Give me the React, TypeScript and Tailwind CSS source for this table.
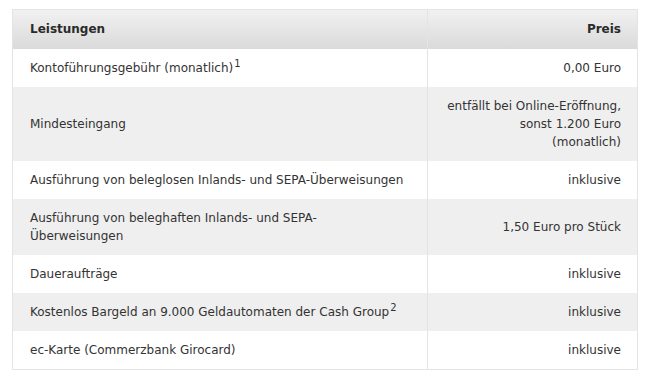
import React from 'react';

interface Row {
  label: React.ReactNode;
  price: React.ReactNode;
}

const rows: Row[] = [
  {
    label: (
      <>
        Kontoführungsgebühr (monatlich)<sup className="text-[10px] ml-[1px]">1</sup>
      </>
    ),
    price: '0,00 Euro',
  },
  {
    label: 'Mindesteingang',
    price: (
      <>
        entfällt bei Online-Eröffnung,
        <br />
        sonst 1.200 Euro
        <br />
        (monatlich)
      </>
    ),
  },
  { label: 'Ausführung von beleglosen Inlands- und SEPA-Überweisungen', price: 'inklusive' },
  {
    label: (
      <>
        Ausführung von beleghaften Inlands- und SEPA-
        <br />
        Überweisungen
      </>
    ),
    price: '1,50 Euro pro Stück',
  },
  { label: 'Daueraufträge', price: 'inklusive' },
  {
    label: (
      <>
        Kostenlos Bargeld an 9.000 Geldautomaten der Cash Group<sup className="text-[10px] ml-[1px]">2</sup>
      </>
    ),
    price: 'inklusive',
  },
  { label: 'ec-Karte (Commerzbank Girocard)', price: 'inklusive' },
];

export default function App() {
  return (
    <div className="w-[649px] h-[380px] bg-white pt-[9px] pl-[12px] font-['DejaVu_Sans',Verdana,sans-serif] text-[12px] leading-[18px] text-[#333]">
      <table className="w-[626px] border-collapse border border-[#e4e4e4]">
        <thead>
          <tr className="bg-gradient-to-b from-[#f1f1f1] to-[#dadada]">
            <th className="h-[39px] pl-[17px] text-left font-bold text-[#2a2a2a]">Leistungen</th>
            <th className="w-[210px] pr-[16px] text-right font-bold text-[#2a2a2a] border-l border-[#e4e4e4]">
              Preis
            </th>
          </tr>
        </thead>
        <tbody>
          {rows.map((row, idx) => (
            <tr key={idx} className={idx % 2 === 0 ? 'bg-white' : 'bg-[#efefef]'}>
              <td className="py-[10px] pl-[17px] align-middle">{row.label}</td>
              <td className="py-[10px] pr-[16px] text-right align-middle border-l border-[#e4e4e4]">
                {row.price}
              </td>
            </tr>
          ))}
        </tbody>
      </table>
    </div>
  );
}
